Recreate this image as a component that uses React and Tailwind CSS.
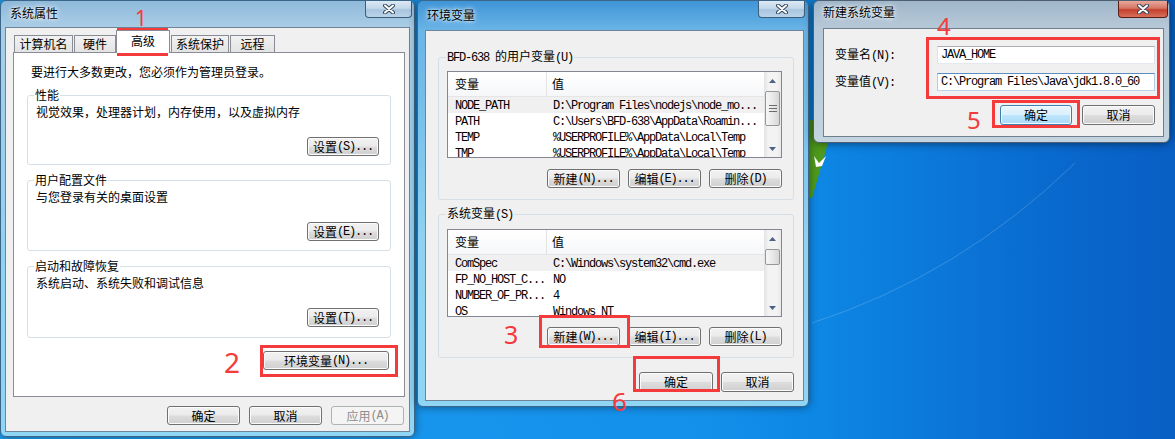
import React from "react";

const mono = "font-['Liberation_Mono',monospace] text-[12px] tracking-[-1.2px]";

// split text into CJK runs and half-width ASCII runs (SimSun-like widths)
const Tx = ({ t }) =>
  t
    .split(/([\x20-\x7e]+)/)
    .filter(Boolean)
    .map((p, i) =>
      /^[\x20-\x7e]+$/.test(p) ? (
        <span key={i} className={mono}>
          {p}
        </span>
      ) : (
        <span key={i}>{p}</span>
      )
    );

const Btn = ({ t, w, kind = "normal", h = "h-[19px]", className = "" }) => {
  const skin =
    kind === "disabled"
      ? "border-[#adb2b5] bg-[#f4f4f4] text-[#8d8d8d]"
      : kind === "default"
      ? "border-[#3c7fb1] bg-[linear-gradient(#eaf6fd_0%,#d9f0fc_48%,#bee6fd_52%,#a7d9f5_100%)] shadow-[inset_0_0_0_1px_#f4fbff]"
      : "border-[#707070] bg-[linear-gradient(#f2f2f2_0%,#ebebeb_48%,#dddddd_52%,#cfcfcf_100%)] shadow-[inset_0_0_0_1px_#fbfbfb]";
  return (
    <div
      className={`flex shrink-0 items-center justify-center rounded-[3px] border leading-[16px] whitespace-nowrap ${h} ${skin} ${w} ${className}`}
    >
      <Tx t={t} />
    </div>
  );
};

const CloseBtn = ({ red, className = "" }) => (
  <div
    className={`flex h-[17px] shrink-0 items-center justify-center rounded-b-[4px] border border-t-0 ${
      red
        ? "border-[#5b1d14] bg-[linear-gradient(#e9a99b_0%,#d47566_45%,#c2402c_55%,#d8705c_100%)]"
        : "border-[#3d5d7a] bg-[linear-gradient(#dce9f4_0%,#c3d8ea_45%,#a9c5df_55%,#b9d3e8_100%)]"
    } ${className}`}
  >
    <svg width="12" height="10" viewBox="0 0 12 10">
      <path d="M2 1.5L10 8.5M10 1.5L2 8.5" stroke="#33475c" strokeWidth="4" strokeLinecap="round" />
      <path d="M2 1.5L10 8.5M10 1.5L2 8.5" stroke="#ffffff" strokeWidth="2" strokeLinecap="round" />
    </svg>
  </div>
);

const Arrow = ({ down }) => (
  <div className="flex h-[17px] shrink-0 items-center justify-center">
    <svg width="7" height="4" viewBox="0 0 7 4">
      <path d={down ? "M0 0L3.5 4L7 0Z" : "M0 4L3.5 0L7 4Z"} fill="#4d6185" />
    </svg>
  </div>
);

const ScrollBar = ({ thumbH, grip }) => (
  <div className="flex w-[17px] shrink-0 flex-col bg-[linear-gradient(90deg,#e2e2e2,#f3f3f3_25%,#f3f3f3_75%,#e8e8e8)]">
    <Arrow />
    <div
      className={`mx-[1px] mt-[2px] flex flex-col items-center justify-center gap-[1px] rounded-[2px] border border-[#979797] bg-[linear-gradient(90deg,#f6f6f6,#e9e9e9_50%,#d6d6d6)] ${thumbH}`}
    >
      {grip &&
        [0, 1, 2].map((i) => (
          <div key={i} className="h-[2px] w-[8px] border-t border-[#6b6b6b] border-b-white" />
        ))}
    </div>
    <div className="flex-1" />
    <Arrow down />
  </div>
);

const ListView = ({ rows, h, thumbH, grip }) => (
  <div className={`flex overflow-hidden border border-[#828790] bg-white ${h}`}>
    <div className="flex min-w-0 flex-1 flex-col">
      <div className="flex h-[25px] shrink-0 border-b border-[#e5e5e5] bg-[linear-gradient(#ffffff,#f6f7f9)]">
        <div className="flex w-[99px] items-center border-r border-[#e3e3e3] pl-[7px]">变量</div>
        <div className="flex items-center pl-[5px]">值</div>
      </div>
      {rows.map(([a, b], i) => (
        <div
          key={a}
          className={`flex h-[16px] shrink-0 items-center whitespace-nowrap ${i === 0 ? "bg-[#f0f0f0]" : ""}`}
        >
          <div className="w-[99px] pl-[7px]">
            <Tx t={a} />
          </div>
          <div className="pl-[6px]">
            <Tx t={b} />
          </div>
        </div>
      ))}
    </div>
    <ScrollBar thumbH={thumbH} grip={grip} />
  </div>
);

const Group = ({ label, children, className = "", legendMl = "ml-[6px]" }) => (
  <fieldset className={`rounded-[3px] border border-[#d5dfe5] ${className}`}>
    <legend className={`px-[1px] leading-[16px] ${legendMl}`}>
      <Tx t={label} />
    </legend>
    {children}
  </fieldset>
);

const Red = ({ className }) => <div className={`absolute border-[3px] border-[#f43a3a] ${className}`} />;
const Num = ({ n, className }) => (
  <div className={`absolute font-['Noto_Sans',sans-serif] leading-none text-[#f43a3a] ${className}`}>{n}</div>
);

const userVars = [
  ["NODE_PATH", "D:\\Program Files\\nodejs\\node_mo..."],
  ["PATH", "C:\\Users\\BFD-638\\AppData\\Roamin..."],
  ["TEMP", "%USERPROFILE%\\AppData\\Local\\Temp"],
  ["TMP", "%USERPROFILE%\\AppData\\Local\\Temp"],
];

const sysVars = [
  ["ComSpec", "C:\\Windows\\system32\\cmd.exe"],
  ["FP_NO_HOST_C...", "NO"],
  ["NUMBER_OF_PR...", "4"],
  ["OS", "Windows_NT"],
];

const tabs = [
  { t: "计算机名", c: "w-[59px]" },
  { t: "硬件", c: "ml-[1px] w-[42px]" },
  { t: "高级", c: "w-[54px]", on: true },
  { t: "系统保护", c: "ml-[1px] w-[58px]" },
  { t: "远程", c: "ml-[1px] w-[45px]" },
];

const glow = "[text-shadow:0_0_6px_#ffffff,0_0_3px_#ffffff]";

export default function App() {
  return (
    <div className="relative h-[439px] w-[1175px] overflow-hidden bg-[linear-gradient(90deg,#1e9cf0_0%,#1390ea_60%,#0d86e4_70%,#0966cb_92%,#085fc4_100%)] font-['Noto_Sans_CJK_SC',sans-serif] text-[12px] text-black">
      {/* desktop decoration */}
      <svg className="absolute left-0 top-0" width="1175" height="439">
        <path d="M812 323 Q 960 275 1075 163" stroke="rgba(255,255,255,0.18)" strokeWidth="1" fill="none" />
        <path d="M804 120 L834 120 L826 150 L812 198 L804 198 Z" fill="#4e9a1c" />
        <path d="M814 156 L819 163 L826 156 L822 166 L816 167 Z" fill="#ffffff" />
      </svg>

      {/* 系统属性 */}
      <div className="absolute left-0 top-0 flex h-[437px] w-[415px] flex-col rounded-[6px] border border-[#3b6689] bg-[linear-gradient(180deg,#8fb9da_0px,#a9cde6_26px,#8fd2f1_60%,#8fd6f4_100%)] pb-[4px] pl-[4px] pr-[4px] shadow-[0_0_8px_rgba(0,0,0,0.45)]">
        <div className="flex h-[26px] shrink-0 items-start justify-between">
          <span className={`ml-[5px] mt-[4px] leading-[16px] ${glow}`}>系统属性</span>
          <CloseBtn className="mr-[-2px] w-[47px]" />
        </div>
        <div className="flex flex-1 flex-col border border-[#6f8498] bg-[#f0f0f0]">
          <div className="flex h-[24px] shrink-0 items-end pl-[8px]">
            {tabs.map((tb) => (
              <div
                key={tb.t}
                className={`flex items-center justify-center border border-b-0 border-[#898c95] leading-[16px] ${tb.c} ${
                  tb.on
                    ? "relative z-10 mb-[-1px] h-[23px] bg-white pb-[2px]"
                    : "h-[17px] bg-[linear-gradient(#f2f2f2,#e3e3e3)]"
                }`}
              >
                {tb.t}
              </div>
            ))}
          </div>
          <div className="ml-[7px] flex h-[345px] w-[392px] flex-col border border-[#898c95] bg-white">
            <p className="ml-[17px] mt-[11px] leading-[16px]">要进行大多数更改，您必须作为管理员登录。</p>
            <Group label="性能" className="ml-[13px] mt-[7px] w-[364px]">
              <div className="flex flex-col pb-[8px] pl-[8px] pr-[11px] pt-[1px]">
                <span className="leading-[16px]">视觉效果，处理器计划，内存使用，以及虚拟内存</span>
                <Btn t="设置(S)..." w="w-[72px]" className="mt-[17px] self-end" />
              </div>
            </Group>
            <Group label="用户配置文件" className="ml-[13px] mt-[7px] w-[364px]">
              <div className="flex flex-col pb-[9px] pl-[8px] pr-[11px] pt-[1px]">
                <span className="leading-[16px]">与您登录有关的桌面设置</span>
                <Btn t="设置(E)..." w="w-[72px]" className="mt-[17px] self-end" />
              </div>
            </Group>
            <Group label="启动和故障恢复" className="ml-[13px] mt-[7px] w-[364px]">
              <div className="flex flex-col pb-[10px] pl-[8px] pr-[11px] pt-[1px]">
                <span className="leading-[16px]">系统启动、系统失败和调试信息</span>
                <Btn t="设置(T)..." w="w-[72px]" className="mt-[17px] self-end" />
              </div>
            </Group>
            <Btn t="环境变量(N)..." w="w-[126px]" className="mr-[15px] mt-[13px] self-end" />
          </div>
          <div className="mt-[9px] flex justify-end gap-[9px] pr-[5px]">
            <Btn t="确定" w="w-[73px]" />
            <Btn t="取消" w="w-[73px]" />
            <Btn t="应用(A)" w="w-[73px]" kind="disabled" />
          </div>
        </div>
      </div>

      {/* 环境变量 */}
      <div className="absolute left-[417px] top-0 flex h-[407px] w-[392px] flex-col rounded-[6px] border border-[#3b6689] bg-[linear-gradient(180deg,#3f95d8_0px,#6ab4e6_29px,#8fd2f1_60%,#8fd6f4_100%)] pb-[5px] pl-[7px] pr-[4px] shadow-[0_0_8px_rgba(0,0,0,0.45)]">
        <div className="flex h-[29px] shrink-0 items-start justify-between">
          <span className={`ml-[2px] mt-[6px] leading-[16px] ${glow}`}>环境变量</span>
          <CloseBtn className="mr-[-1px] w-[47px]" />
        </div>
        <div className="flex flex-1 flex-col border border-[#6f8498] bg-[#f0f0f0]">
          <Group label="BFD-638 的用户变量(U)" className="ml-[12px] mt-[17px] w-[356px]" legendMl="ml-[7px]">
            <div className="flex flex-col pb-[11px] pl-[8px] pr-[11px] pt-[5px]">
              <ListView rows={userVars} h="h-[87px]" thumbH="h-[35px]" grip />
              <div className="mt-[11px] flex justify-end gap-[8px]">
                <Btn t="新建(N)..." w="w-[73px]" />
                <Btn t="编辑(E)..." w="w-[73px]" />
                <Btn t="删除(D)" w="w-[73px]" />
              </div>
            </div>
          </Group>
          <Group label="系统变量(S)" className="ml-[12px] mt-[5px] w-[356px]" legendMl="ml-[7px]">
            <div className="flex flex-col pb-[11px] pl-[8px] pr-[11px] pt-[6px]">
              <ListView rows={sysVars} h="h-[88px]" thumbH="h-[16px]" />
              <div className="mt-[10px] flex justify-end gap-[8px]">
                <Btn t="新建(W)..." w="w-[73px]" />
                <Btn t="编辑(I)..." w="w-[73px]" />
                <Btn t="删除(L)" w="w-[73px]" />
              </div>
            </div>
          </Group>
          <div className="mr-[9px] mt-[14px] flex justify-end gap-[8px]">
            <Btn t="确定" w="w-[74px]" h="h-[20px]" />
            <Btn t="取消" w="w-[73px]" h="h-[20px]" />
          </div>
        </div>
      </div>

      {/* 新建系统变量 */}
      <div className="absolute left-[813px] top-0 flex h-[143px] w-[357px] flex-col rounded-[6px] border border-[#4d5f70] bg-[linear-gradient(180deg,#9fb6ca_0px,#b7c9d8_27px,#c3d3df_100%)] pb-[5px] pl-[9px] pr-[5px] shadow-[0_0_10px_rgba(0,0,0,0.55)]">
        <div className="flex h-[27px] shrink-0 items-start justify-between">
          <span className={`mt-[3px] leading-[16px] ${glow}`}>新建系统变量</span>
          <CloseBtn red className="mr-[-4px] w-[50px]" />
        </div>
        <div className="flex flex-1 flex-col border border-[#6f7f8c] bg-[#f0f0f0] pl-[11px] pr-[8px]">
          <div className="mt-[17px] flex items-center">
            <span className="w-[102px] leading-[16px]">
              <Tx t="变量名(N):" />
            </span>
            <div className="flex h-[18px] w-[218px] items-center border border-[#abadb3] border-b-[#e3e9ef] border-l-[#e2e3ea] border-r-[#dbdfe6] bg-white pl-[3px]">
              <span className={mono}>JAVA_HOME</span>
            </div>
          </div>
          <div className="mt-[9px] flex items-center">
            <span className="w-[102px] leading-[16px]">
              <Tx t="变量值(V):" />
            </span>
            <div className="flex h-[18px] w-[218px] items-center border border-[#5b8fc3] border-b-[#b7d5ee] border-l-[#b1cde8] border-r-[#b1cde8] bg-white pl-[3px]">
              <span className={`${mono} whitespace-nowrap`}>C:\Program Files\Java\jdk1.8.0_60</span>
            </div>
          </div>
          <div className="mt-[14px] flex justify-end gap-[10px]">
            <Btn t="确定" w="w-[72px]" h="h-[20px]" kind="default" />
            <Btn t="取消" w="w-[73px]" h="h-[20px]" />
          </div>
        </div>
      </div>

      {/* annotations */}
      <Red className="left-[117px] top-[28px] h-[28px] w-[51px]" />
      <Num n="1" className="left-[135px] top-[8px] text-[21px]" />
      <Red className="left-[260px] top-[345px] h-[32px] w-[138px]" />
      <Num n="2" className="left-[224px] top-[348px] text-[28px]" />
      <Red className="left-[539px] top-[315px] h-[33px] w-[91px]" />
      <Num n="3" className="left-[504px] top-[322px] text-[25px]" />
      <Red className="left-[926px] top-[37px] h-[62px] w-[234px]" />
      <Num n="4" className="left-[937px] top-[14px] text-[24px]" />
      <Red className="left-[992px] top-[100px] h-[28px] w-[88px]" />
      <Num n="5" className="left-[967px] top-[108px] text-[24px]" />
      <Red className="left-[633px] top-[356px] h-[36px] w-[87px]" />
      <Num n="6" className="left-[612px] top-[388px] text-[26px]" />
    </div>
  );
}
